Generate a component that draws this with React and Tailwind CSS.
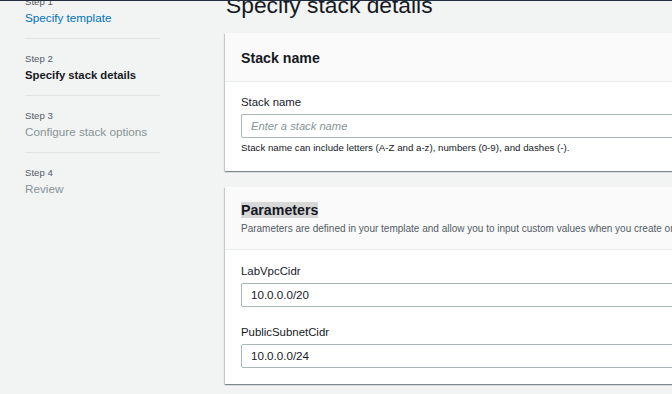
import React from "react";

const steps = [
  { label: "Step 1", title: "Specify template", state: "done" },
  { label: "Step 2", title: "Specify stack details", state: "current" },
  { label: "Step 3", title: "Configure stack options", state: "todo" },
  { label: "Step 4", title: "Review", state: "todo" },
];

const titleClass = {
  done: "text-[#0073bb] text-[11.7px]",
  current: "text-[#16191f] text-[11.3px] font-bold",
  todo: "text-[#879596] text-[11.7px]",
};

const Field = ({ label, value, placeholder }) => (
  <div>
    <div className="text-[11.4px] leading-[16px] text-[#16191f]">{label}</div>
    <div className="mt-[4px] h-[24px] w-[600px] rounded-[2px] border border-[#aab7b8] bg-white pl-[9px] flex items-center">
      {value ? (
        <span className="text-[11.6px] text-[#16191f]">{value}</span>
      ) : (
        <span className="text-[11.2px] italic text-[#879596]">{placeholder}</span>
      )}
    </div>
  </div>
);

const Card = ({ children }) => (
  <div className="bg-white shadow-[0_1px_1px_0_rgba(0,28,36,0.3),1px_1px_1px_0_rgba(0,28,36,0.15),-1px_1px_1px_0_rgba(0,28,36,0.15)]">
    {children}
  </div>
);

export default function App() {
  return (
    <div
      className="w-[672px] h-[394px] overflow-hidden bg-[#f2f3f3] border-t border-[#232f3e] flex"
      style={{ fontFamily: '"Liberation Sans", Arial, sans-serif' }}
    >
      {/* Wizard steps */}
      <nav className="w-[225px] shrink-0 pl-[25px] mt-[-19px]">
        {steps.map((s) => (
          <div key={s.label} className="w-[135px] pt-[13px] pb-[12px] border-b border-[#dfe3e3] last:border-b-0">
            <div className="text-[9.6px] leading-[14px] text-[#545b64]">{s.label}</div>
            <div className={`mt-px leading-[16px] ${titleClass[s.state]}`}>{s.title}</div>
          </div>
        ))}
      </nav>

      {/* Main content */}
      <main className="w-[640px] shrink-0 mt-[-10px]">
        <h1 className="text-[22.8px] leading-[28px] text-[#16191f] pl-px">Specify stack details</h1>

        <div className="mt-[14px]">
          <Card>
            <div className="bg-[#fafafa] border-b border-[#eaeded] px-[16px] pt-[16px] pb-[14px]">
              <h2 className="text-[14.2px] leading-[18px] font-bold text-[#16191f]">Stack name</h2>
            </div>
            <div className="px-[16px] pt-[12px] pb-[16px]">
              <Field label="Stack name" placeholder="Enter a stack name" />
              <p className="mt-[3px] text-[9.7px] leading-[14px] text-[#16191f]">
                Stack name can include letters (A-Z and a-z), numbers (0-9), and dashes (-).
              </p>
            </div>
          </Card>
        </div>

        <div className="mt-[16px]">
          <Card>
            <div className="bg-[#fafafa] border-b border-[#eaeded] px-[16px] pt-[15px] pb-[13px]">
              <h2 className="text-[14.2px] leading-[17px] font-bold text-[#16191f]">
                <span className="bg-[#d8d8d8]">Parameters</span>
              </h2>
              <p className="mt-[3px] text-[10px] leading-[14px] text-[#545b64] whitespace-nowrap">
                Parameters are defined in your template and allow you to input custom values when you create or update a stack.
              </p>
            </div>
            <div className="px-[16px] pt-[13px] pb-[16px] flex flex-col gap-[17px]">
              <Field label="LabVpcCidr" value="10.0.0.0/20" />
              <Field label="PublicSubnetCidr" value="10.0.0.0/24" />
            </div>
          </Card>
        </div>
      </main>
    </div>
  );
}
